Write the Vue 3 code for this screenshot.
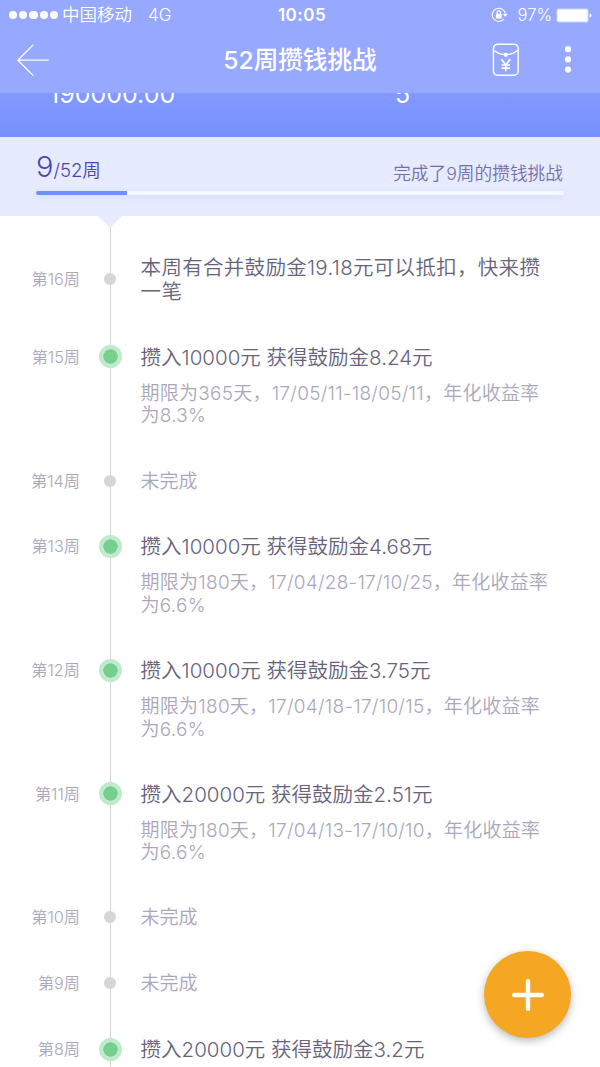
<template>
  <div class="page">
    <!-- 状态栏 -->
    <div class="status-bar">
      <div class="status-left">
        <div class="signal">
          <i v-for="n in 5" :key="n"></i>
        </div>
        <span class="carrier">中国移动</span>
        <span class="network">4G</span>
      </div>
      <div class="clock">10:05</div>
      <div class="status-right">
        <svg class="lock-icon" width="18" height="16" viewBox="0 0 18 16" fill="none" stroke="#fff">
          <path d="M12.9 12.2A6.6 6.6 0 1 1 14.4 6.8" stroke-width="1.1" />
          <path d="M11.9 6.9h4.8l-2.4 2.9z" fill="#fff" stroke="none" />
          <rect x="4.9" y="6.8" width="5.8" height="4.7" rx="0.6" fill="#fff" stroke="none" />
          <path d="M6.1 7.2V5.6a1.7 1.7 0 0 1 3.4 0v1.6" stroke-width="1.2" />
        </svg>
        <span class="percent">97%</span>
        <svg class="battery" width="36" height="15" viewBox="0 0 36 15">
          <rect x="0.5" y="0.5" width="32" height="14" rx="2.2" fill="#c9d2ff" />
          <rect x="1.4" y="1.4" width="30.2" height="12.2" rx="1" fill="#fff" />
          <path d="M33.6 5.3q1.8.6 1.8 2.2t-1.8 2.2z" fill="#fff" />
        </svg>
      </div>
    </div>

    <!-- 导航栏 -->
    <div class="nav-bar">
      <svg class="back" width="34" height="34" viewBox="0 0 34 34" fill="none" stroke="#fff" stroke-width="1.3">
        <path d="M17.4 1.6L1.8 17.2L17.4 32.6M1.8 17.2H32.8" />
      </svg>
      <h1 class="nav-title">52周攒钱挑战</h1>
      <div class="nav-actions">
        <svg width="28" height="34" viewBox="0 0 28 34" fill="none" stroke="#fff">
          <rect x="1.4" y="1.2" width="24.8" height="31" rx="4.2" stroke-width="1.4" />
          <path d="M1.8 7.2Q7 11.6 13.8 11.6T25.8 7.2" stroke-width="1.2" />
          <circle cx="13.8" cy="11.8" r="2.1" fill="#fff" stroke="none" />
          <path d="M9.4 16.2l4.4 5.8l4.4-5.8M13.8 22v6.3M9.6 22h8.4M9.6 25.2h8.4" stroke-width="1.7" />
        </svg>
        <svg width="8" height="28" viewBox="0 0 8 28" fill="#fff">
          <circle cx="4" cy="3.2" r="3.1" />
          <circle cx="4" cy="13.4" r="3.1" />
          <circle cx="4" cy="23.6" r="3.1" />
        </svg>
      </div>
    </div>

    <!-- 金额汇总 -->
    <div class="summary">
      <div class="summary-cell">190000.00</div>
      <div class="summary-cell second">5</div>
    </div>

    <!-- 进度 -->
    <div class="progress">
      <div class="progress-text">
        <div class="count"><b>{{ done }}</b>/{{ total }}周</div>
        <div class="message">完成了{{ done }}周的攒钱挑战</div>
      </div>
      <div class="track">
        <div class="bar" :style="{ width: (done / total) * 100 + '%' }"></div>
      </div>
    </div>

    <!-- 时间线 -->
    <div class="timeline">
      <div v-for="item in weeks" :key="item.week" class="item" :class="item.type">
        <div class="week">第{{ item.week }}周</div>
        <div class="node"><i></i></div>
        <div class="title">{{ item.title }}</div>
        <div v-if="item.detail" class="detail">{{ item.detail }}</div>
      </div>
    </div>

    <!-- 添加按钮 -->
    <button class="add">
      <svg width="34" height="34" viewBox="0 0 34 34" stroke="#fff" stroke-width="4.4" stroke-linecap="round">
        <path d="M17 3.2v27.6M3.2 17h27.6" />
      </svg>
    </button>
  </div>
</template>

<script setup>
import { ref } from 'vue'

const done = ref(9)
const total = 52

const weeks = ref([
  { week: 16, type: 'current', title: '本周有合并鼓励金19.18元可以抵扣，快来攒\n一笔' },
  { week: 15, type: 'done', title: '攒入10000元 获得鼓励金8.24元', detail: '期限为365天，17/05/11-18/05/11，年化收益率\n为8.3%' },
  { week: 14, type: 'missed', title: '未完成' },
  { week: 13, type: 'done', title: '攒入10000元 获得鼓励金4.68元', detail: '期限为180天，17/04/28-17/10/25，年化收益率\n为6.6%' },
  { week: 12, type: 'done', title: '攒入10000元 获得鼓励金3.75元', detail: '期限为180天，17/04/18-17/10/15，年化收益率\n为6.6%' },
  { week: 11, type: 'done', title: '攒入20000元 获得鼓励金2.51元', detail: '期限为180天，17/04/13-17/10/10，年化收益率\n为6.6%' },
  { week: 10, type: 'missed', title: '未完成' },
  { week: 9, type: 'missed', title: '未完成' },
  { week: 8, type: 'done', title: '攒入20000元 获得鼓励金3.2元' }
])
</script>

<style>
body {
  margin: 0;
  background: #fff;
}
</style>

<style scoped>
.page {
  position: relative;
  display: flex;
  flex-direction: column;
  width: 600px;
  height: 1067px;
  overflow: hidden;
  background: #fff;
  font-family: Inter, "Noto Sans CJK SC", sans-serif;
  font-weight: 350;
}

/* 状态栏 */
.status-bar {
  flex: none;
  display: grid;
  grid-template-columns: 1fr auto 1fr;
  align-items: center;
  height: 30px;
  padding: 0 8px 0 9px;
  background: #97a8ff;
  color: #fff;
  font-size: 17px;
  line-height: 30px;
}

.status-left,
.status-right {
  display: flex;
  align-items: center;
}

.status-right {
  justify-content: flex-end;
}

.signal {
  display: flex;
  gap: 2px;
}

.signal i {
  width: 8.2px;
  height: 8.2px;
  border-radius: 50%;
  background: #fff;
}

.carrier {
  margin-left: 4px;
  font-size: 17.5px;
}

.network {
  margin-left: 16px;
}

.clock {
  margin-left: 3px;
  font-size: 17px;
  font-weight: 600;
  letter-spacing: 0.5px;
}

.lock-icon {
  margin-right: 9px;
}

.percent {
  margin-right: 4px;
  font-size: 16.6px;
}

/* 导航栏 */
.nav-bar {
  flex: none;
  display: grid;
  grid-template-columns: 1fr auto 1fr;
  align-items: center;
  height: 63px;
  box-sizing: border-box;
  padding: 0 28px 4px 16px;
  background: #97a8ff;
}

.nav-title {
  margin: 0 0 0 12px;
  color: #fff;
  font-size: 24.6px;
  font-weight: 500;
  line-height: 36px;
}

.nav-actions {
  display: flex;
  align-items: center;
  justify-content: flex-end;
  gap: 44px;
}

/* 金额汇总，上半部分被导航栏盖住 */
.summary {
  flex: none;
  display: flex;
  height: 44px;
  overflow: hidden;
  background: linear-gradient(#8299ff, #7690ff);
  color: #fff;
  font-size: 25px;
  font-weight: 400;
  line-height: 30px;
}

.summary-cell {
  width: 300px;
  margin-top: -14.5px;
  padding-left: 49px;
  box-sizing: border-box;
}

.summary-cell.second {
  padding-left: 95px;
}

/* 进度 */
.progress {
  flex: none;
  height: 79px;
  box-sizing: border-box;
  padding: 12px 36px 0;
  background: #e6ebff;
}

.progress-text {
  display: flex;
  align-items: baseline;
  justify-content: space-between;
  height: 42px;
}

.count {
  color: #4c45b0;
  font-size: 18.6px;
  line-height: 36px;
}

.count b {
  font-size: 29px;
  font-weight: 350;
}

.message {
  margin-right: 1px;
  padding-top: 3px;
  color: #7470aa;
  font-size: 17.7px;
  transform: translateY(3px);
}

.track {
  height: 4px;
  border-radius: 2px;
  background: #f8f9ff;
  box-shadow: 0 2px 6px rgba(100, 120, 220, 0.14);
}

.bar {
  height: 4px;
  border-radius: 2px 0 0 2px;
  background: #728fff;
}

/* 时间线 */
.timeline {
  position: relative;
  flex: 1;
  padding-top: 39px;
}

.timeline::before {
  content: '';
  position: absolute;
  top: 0;
  bottom: 0;
  left: 109.6px;
  width: 1.4px;
  background: #d6d6d6;
}

.timeline::after {
  content: '';
  position: absolute;
  top: -1px;
  left: 97px;
  border: 13px solid transparent;
  border-top-color: #e6ebff;
  border-bottom: 0;
}

.item {
  display: grid;
  grid-template-columns: 80px 60px 1fr;
  align-items: center;
  padding-bottom: 41.8px;
}

.week {
  padding-top: 1px;
  color: #aaa7b8;
  font-size: 16.2px;
  line-height: 23px;
  text-align: right;
}

.node {
  position: relative;
  display: flex;
  justify-content: center;
}

.node i {
  width: 12px;
  height: 12px;
  border-radius: 50%;
  background: #d6d6d6;
}

.title,
.detail {
  position: relative;
  top: 1px;
  padding-left: 0.6px;
  white-space: pre;
}

.title {
  color: #66637a;
  font-size: 20.5px;
  line-height: 24px;
}

.current .title {
  letter-spacing: 0.3px;
}

.detail {
  grid-column: 3;
  margin-top: 13.1px;
  color: #aaa7ba;
  font-size: 19px;
  line-height: 22.4px;
  letter-spacing: 0.24px;
}

.done .node i {
  width: 15px;
  height: 15px;
  border: 4px solid #c0e9cd;
  background: #76cf8d;
  background-clip: padding-box;
}

.missed .title {
  color: #aaa7ba;
  font-size: 19px;
}

/* 添加按钮 */
.add {
  position: absolute;
  right: 29px;
  bottom: 29px;
  display: flex;
  align-items: center;
  justify-content: center;
  width: 87px;
  height: 87px;
  padding: 0;
  border: 0;
  border-radius: 50%;
  background: #f5a623;
  box-shadow: 0 3px 9px rgba(0, 0, 0, 0.28);
}
</style>
